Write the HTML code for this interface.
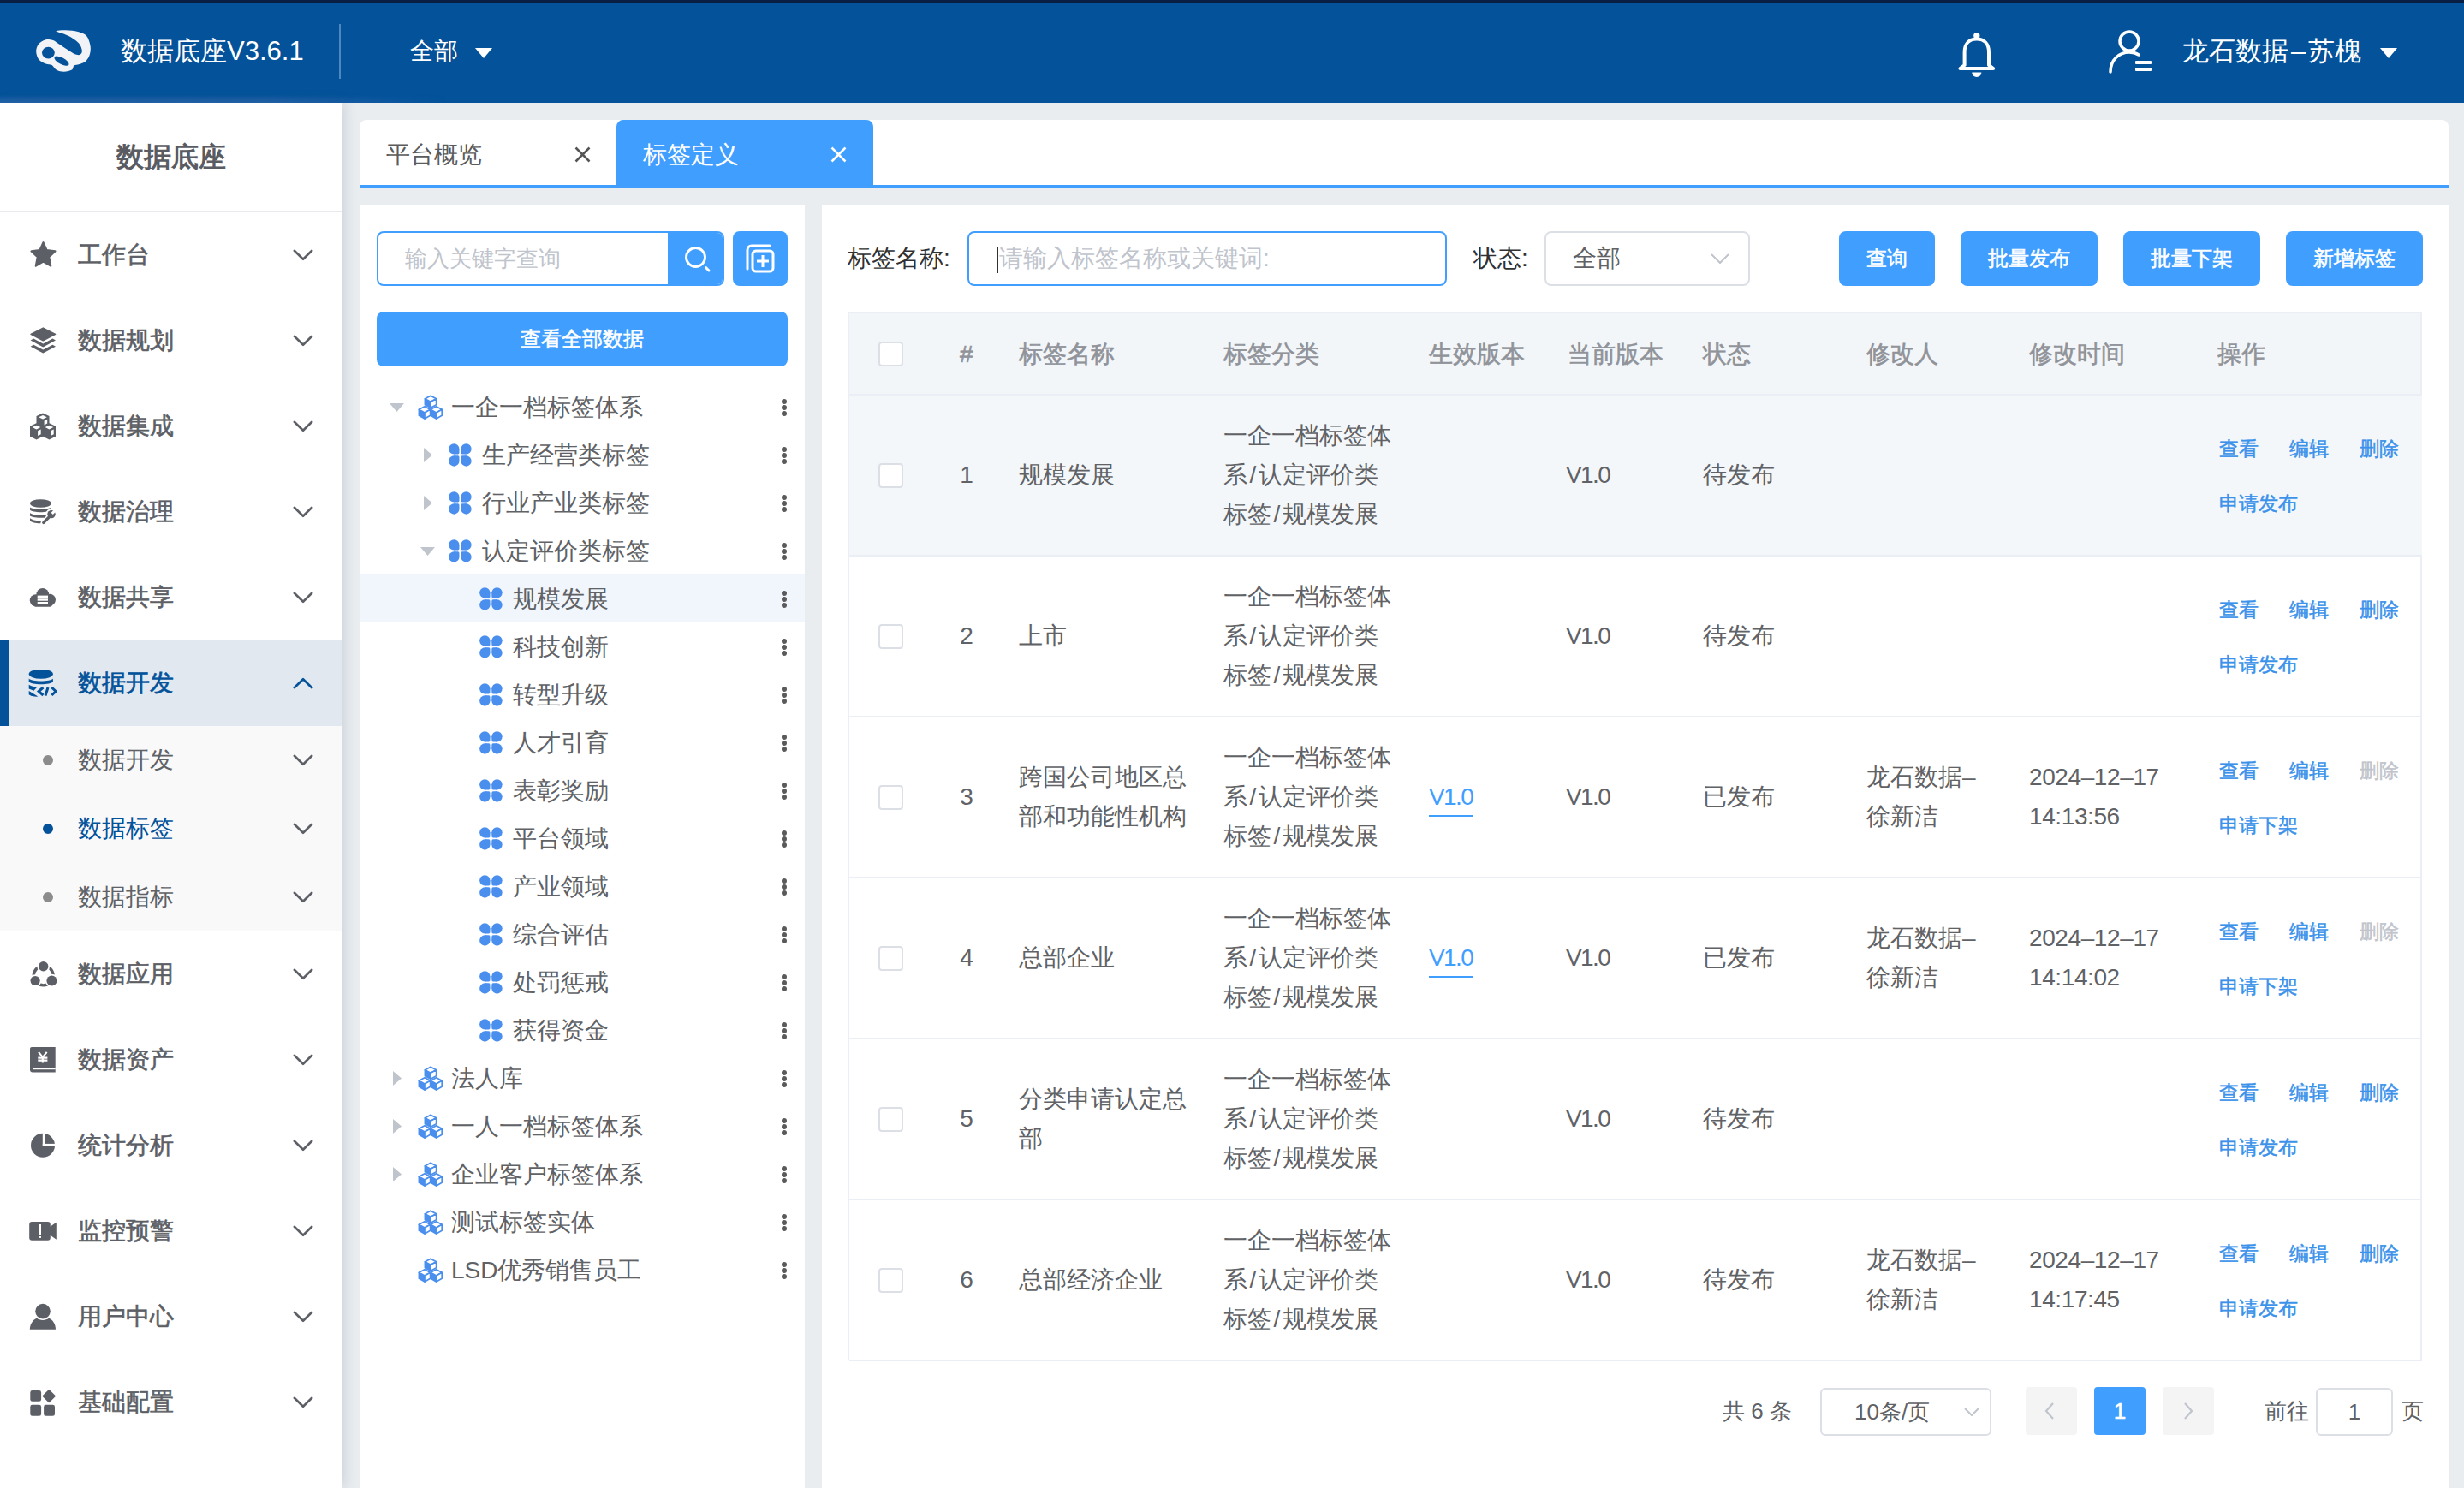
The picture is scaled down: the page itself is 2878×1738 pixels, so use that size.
<!DOCTYPE html>
<html><head><meta charset="utf-8"><title>数据底座</title>
<style>
*{box-sizing:border-box;margin:0;padding:0}
html,body{width:2878px;height:1738px;overflow:hidden}
body{position:relative;background:#e9edf0;font-family:"Liberation Sans",sans-serif;color:#606266}
.abs{position:absolute}
.t{position:absolute;white-space:nowrap}
#hdr{position:absolute;left:0;top:0;width:2878px;height:120px;background:#03529a}
#hdr .topline{position:absolute;left:0;top:0;width:100%;height:3px;background:#0a1f44}
#side{position:absolute;left:0;top:120px;width:400px;height:1618px;background:#fff;box-shadow:2px 0 14px rgba(60,80,110,0.18)}
.mi{position:absolute;left:0;width:400px;height:100px}
.mi .lab{position:absolute;left:91px;top:0;line-height:100px;font-size:28px;font-weight:400;-webkit-text-stroke-width:0.6px;color:#5d5f66}
.mi svg.ic{position:absolute;left:34px;top:34px;width:34px;height:34px}
.mi svg.chev{position:absolute;left:342px;top:43px;width:24px;height:14px}
.smi{position:absolute;left:0;width:400px;height:80px}
.smi .lab{position:absolute;left:91px;top:0;line-height:80px;font-size:28px;color:#606266}
.smi .dot{position:absolute;left:50px;top:34px;width:12px;height:12px;border-radius:50%;background:#8c8c8c}
.smi svg.chev{position:absolute;left:342px;top:33px;width:24px;height:14px}
#tabs{position:absolute;left:420px;top:140px;width:2440px;height:80px;background:#fff;border-radius:8px 8px 0 0;border-bottom:4px solid #409eff}
.tab{position:absolute;top:0;height:76px;width:300px}
.tab .lab{position:absolute;left:31px;top:3px;line-height:76px;font-size:28px;color:#5b5b5b}
#tree{position:absolute;left:420px;top:240px;width:520px;height:1498px;background:#fff}
#main{position:absolute;left:960px;top:240px;width:1900px;height:1498px;background:#fff}
.btn{position:absolute;top:30px;height:64px;background:#409eff;border-radius:8px;color:#fff;font-size:24px;font-weight:400;-webkit-text-stroke-width:0.6px;text-align:center;line-height:64px}
.tn{position:absolute;left:0;width:520px;height:56px}
.tn .lab{position:absolute;top:1px;line-height:56px;font-size:28px;color:#606266}
.tn .more{position:absolute;left:493px;top:19px;width:6px;height:20px}
.th{position:absolute;top:0;line-height:95px;font-size:28px;font-weight:400;-webkit-text-stroke-width:0.6px;color:#909399}
.row{position:absolute;left:0;width:1837px;height:188px;border-bottom:2px solid #ebeef5}
.cell{position:absolute;font-size:28px;line-height:46px;color:#606266;white-space:nowrap}
.cb{position:absolute;width:29px;height:29px;border:2px solid #dcdfe6;border-radius:4px;background:#fff}
.op{position:absolute;font-size:23px;font-weight:400;-webkit-text-stroke-width:0.5px;color:#3c92ea;line-height:30px;white-space:nowrap}
</style></head><body>

<div id="hdr"><div class="topline"></div><div class="abs" style="left:0;top:110px;width:520px;height:10px;background:linear-gradient(to bottom,rgba(3,82,154,0),rgba(45,105,175,0.75));-webkit-mask-image:linear-gradient(to right,#000 60%,transparent);"></div>
<svg class="abs" style="left:30px;top:25px" width="90" height="70" viewBox="0 0 90 70">
<path d="M36.0 11.0 C37.5 10.6 42.8 10.1 47.0 10.3 C51.2 10.5 57.2 11.1 61.0 12.0 C64.8 12.9 67.5 14.0 69.6 15.5 C71.7 17.0 72.4 18.5 73.4 21.0 C74.4 23.5 75.6 27.4 75.8 30.6 C76.0 33.8 75.4 37.3 74.4 40.0 C73.4 42.7 71.6 45.3 69.6 47.0 C67.6 48.7 64.8 49.2 62.6 50.0 C60.4 50.8 57.9 50.4 56.5 51.5 C55.1 52.6 56.0 55.3 54.0 56.5 C52.0 57.7 47.7 58.8 44.7 58.8 C41.7 58.8 38.1 57.8 35.8 56.5 C33.4 55.2 32.6 52.2 30.6 51.0 C28.6 49.8 26.0 50.4 23.5 49.4 C21.0 48.4 17.4 47.1 15.5 44.7 C13.6 42.4 12.3 38.3 12.2 35.3 C12.1 32.2 13.1 28.8 15.0 26.4 C16.9 24.0 20.7 21.9 23.5 21.2 C26.3 20.5 29.4 21.1 32.0 22.0 C34.6 22.9 36.2 24.7 39.0 26.5 C41.8 28.3 46.0 31.1 49.0 33.0 C52.0 34.9 54.6 37.0 57.0 38.0 C59.4 39.0 62.0 39.5 63.5 38.8 C65.0 38.1 66.0 36.1 65.8 34.0 C65.6 31.9 64.4 28.4 62.5 26.0 C60.6 23.6 57.4 21.4 54.5 19.5 C51.6 17.6 47.8 16.0 45.0 14.8 C42.2 13.6 39.5 13.1 38.0 12.5 C36.5 11.9 34.5 11.4 36.0 11.0 Z" fill="#f1f3f6"/>
<ellipse cx="26.4" cy="36.6" rx="7.4" ry="6.8" fill="#03529a"/>
<ellipse cx="42" cy="46.2" rx="9.5" ry="3.8" transform="rotate(28 42 46.2)" fill="#03529a"/>
</svg>
<div class="t" style="left:141px;top:0;line-height:120px;font-size:31px;color:#fff">数据底座V3.6.1</div>
<div class="abs" style="left:396px;top:28px;width:2px;height:64px;background:rgba(140,180,225,0.55)"></div>
<div class="t" style="left:479px;top:0;line-height:120px;font-size:28px;color:#fff">全部</div>
<svg class="abs" style="left:555px;top:56px" width="20" height="12" viewBox="0 0 20 12"><path d="M0 0H20L10 12Z" fill="#fff"/></svg>
<svg class="abs" style="left:2286px;top:36px" width="48" height="56" viewBox="0 0 48 56">
<circle cx="22.8" cy="5.5" r="3.6" fill="#fff"/>
<path d="M22.8 9.6 C13.5 9.6 8.6 16 8.6 25 V40 L3.4 44 H42.2 L37 40 V25 C37 16 32.1 9.6 22.8 9.6 Z" fill="none" stroke="#fff" stroke-width="4" stroke-linejoin="round"/>
<path d="M17.3 48.6 H28.3 C28.3 52 25.8 54 22.8 54 C19.8 54 17.3 52 17.3 48.6 Z" fill="#fff"/>
</svg>
<svg class="abs" style="left:2462px;top:34px" width="54" height="52" viewBox="0 0 54 52">
<circle cx="25" cy="14" r="11" fill="none" stroke="#fff" stroke-width="3.5"/>
<path d="M3 50 C3 36 13 27 25 27 C29 27 33 28 36 30" fill="none" stroke="#fff" stroke-width="3.5" stroke-linecap="round"/>
<rect x="32" y="37" width="19" height="4" rx="1" fill="#fff"/>
<rect x="32" y="45" width="19" height="4" rx="1" fill="#fff"/>
</svg>
<div class="t" style="left:2549px;top:0;line-height:120px;font-size:31px;color:#fff">龙石数据<span style="margin:0 3px">–</span>苏槐</div>
<svg class="abs" style="left:2780px;top:56px" width="20" height="12" viewBox="0 0 20 12"><path d="M0 0H20L10 12Z" fill="#fff"/></svg>
</div>
<div id="side">
<div class="t" style="left:0;width:400px;text-align:center;top:28px;line-height:70px;font-size:32px;font-weight:700;color:#5a5c63">数据底座</div>
<div class="abs" style="left:0;top:126px;width:400px;height:2px;background:#e8e9ec"></div>
<div class="mi" style="top:128px"><svg class="ic" viewBox="0 0 34 34"><path d="M16.5 1.2 L20.6 10.1 L30.4 11.4 L23.2 18.2 L25.2 28.6 L16.5 23.6 L7.8 28.6 L9.8 18.2 L2.6 11.4 L12.4 10.1 Z" fill="#5d5f66" stroke="#5d5f66" stroke-width="2.2" stroke-linejoin="round"/></svg><div class="lab">工作台</div><svg class="chev" viewBox="0 0 24 14"><path d="M1.8 1.8 L12 11.8 L22.2 1.8" fill="none" stroke="#5d5f66" stroke-width="2.6" stroke-linecap="round" stroke-linejoin="round"/></svg></div>
<div class="mi" style="top:228px"><svg class="ic" viewBox="0 0 34 34"><path d="M16.3 1 L30.6 8.4 L16.3 15.8 L2 8.4 Z" fill="#5d5f66" stroke="#5d5f66" stroke-width="1.4" stroke-linejoin="round"/><path d="M5.2 13.6 L16.3 19.4 L27.4 13.6 L31 15.6 L16.3 23.4 L1.6 15.6 Z" fill="#5d5f66"/><path d="M5.2 20.8 L16.3 26.6 L27.4 20.8 L31 22.8 L16.3 30.6 L1.6 22.8 Z" fill="#5d5f66"/></svg><div class="lab">数据规划</div><svg class="chev" viewBox="0 0 24 14"><path d="M1.8 1.8 L12 11.8 L22.2 1.8" fill="none" stroke="#5d5f66" stroke-width="2.6" stroke-linecap="round" stroke-linejoin="round"/></svg></div>
<div class="mi" style="top:328px"><svg class="ic" viewBox="0 0 34 34"><path d="M16 0.5 L23.5 4 V12.3 L31 15.8 V27.8 L23.5 31.5 L16 27.8 L8.5 31.5 L1 27.8 V15.8 L8.5 12.3 V4 Z" fill="#5d5f66"/><path d="M16 3 L20.8 5.3 L16 7.6 L11.2 5.3 Z M17.6 9.5 L21.2 7.7 V12.6 L17.6 14.4 Z M8.5 14.8 L13.3 17.1 L8.5 19.4 L3.7 17.1 Z M10.1 21.3 L13.7 19.5 V25.3 L10.1 27.1 Z M23.5 14.8 L28.3 17.1 L23.5 19.4 L18.7 17.1 Z M25.1 21.3 L28.7 19.5 V25.3 L25.1 27.1 Z" fill="#fff"/></svg><div class="lab">数据集成</div><svg class="chev" viewBox="0 0 24 14"><path d="M1.8 1.8 L12 11.8 L22.2 1.8" fill="none" stroke="#5d5f66" stroke-width="2.6" stroke-linecap="round" stroke-linejoin="round"/></svg></div>
<div class="mi" style="top:428px"><svg class="ic" viewBox="0 0 34 34"><ellipse cx="13.4" cy="6" rx="12.4" ry="4.8" fill="#5d5f66"/><path d="M1 10.6 C4 13.6 22.8 13.6 25.8 10.6 V13.6 C22.8 17.2 4 17.2 1 13.6 Z" fill="#5d5f66"/><path d="M1 17 C4 20 16 20.6 23 19 V22.2 C16 23.4 4 22.6 1 20.4 Z" fill="#5d5f66"/><path d="M1 23.2 C4 26 12 26.8 18 25.6 V28.6 C12 30 3.5 28.6 1 26.4 Z" fill="#5d5f66"/><circle cx="26" cy="18.6" r="6.6" fill="#fff"/><path d="M16.8 28.4 L24 21.2" stroke="#fff" stroke-width="6.4" stroke-linecap="round"/><circle cx="26" cy="18.6" r="4.7" fill="#5d5f66"/><path d="M16.8 28.4 L24 21.2" stroke="#5d5f66" stroke-width="3.4" stroke-linecap="round"/><path d="M25.6 16.8 L29.4 13 L31.6 15.2 L27.8 19 Z" fill="#fff"/></svg><div class="lab">数据治理</div><svg class="chev" viewBox="0 0 24 14"><path d="M1.8 1.8 L12 11.8 L22.2 1.8" fill="none" stroke="#5d5f66" stroke-width="2.6" stroke-linecap="round" stroke-linejoin="round"/></svg></div>
<div class="mi" style="top:528px"><svg class="ic" viewBox="0 0 34 34"><circle cx="15.8" cy="12.4" r="7.4" fill="#5d5f66"/><circle cx="24.2" cy="18.6" r="6.8" fill="#5d5f66"/><circle cx="7.8" cy="19.2" r="7" fill="#5d5f66"/><rect x="5" y="18" width="22" height="8.7" rx="3" fill="#5d5f66"/><rect x="9.7" y="13.6" width="12.3" height="2.4" fill="#fff"/><rect x="9.7" y="17.3" width="12.3" height="2.4" fill="#fff"/><rect x="9.7" y="21" width="12.3" height="2.3" fill="#fff"/></svg><div class="lab">数据共享</div><svg class="chev" viewBox="0 0 24 14"><path d="M1.8 1.8 L12 11.8 L22.2 1.8" fill="none" stroke="#5d5f66" stroke-width="2.6" stroke-linecap="round" stroke-linejoin="round"/></svg></div>
<div class="mi" style="top:628px;background:#e2e8f0"><div class="abs" style="left:0;top:0;width:10px;height:100px;background:#03529a"></div><svg class="ic" style="left:33px" viewBox="0 0 34 34"><ellipse cx="14.8" cy="5.2" rx="14.1" ry="5.6" fill="#03529a"/><path d="M0.7 10.6 C3 14.6 26.6 14.6 28.9 10.6 V14 C26.6 18.4 3 18.4 0.7 14 Z" fill="#03529a"/><path d="M0.7 17.8 C3.5 19.6 7 20.2 10.4 20.6 L6.4 24.7 L0.7 22.6 Z" fill="#03529a"/><path d="M0.7 25 L11.3 31.6 C6.5 31.8 3 30.8 0.7 29.2 Z" fill="#03529a"/><path d="M17.4 21 L12.2 25.5 L17.4 30 M23 21 L20 30.5 M27.4 21 L32.2 25.5 L27.4 30" fill="none" stroke="#03529a" stroke-width="3" stroke-linejoin="miter"/></svg><div class="lab" style="color:#03529a">数据开发</div><svg class="chev" viewBox="0 0 24 14"><path d="M1.8 12.2 L12 2.2 L22.2 12.2" fill="none" stroke="#03529a" stroke-width="2.6" stroke-linecap="round" stroke-linejoin="round"/></svg></div>
<div class="abs" style="left:0;top:728px;width:400px;height:240px;background:#f9f9fa"></div>
<div class="smi" style="top:728px"><div class="dot" style="background:#8c8c8c"></div><div class="lab" style="color:#606266">数据开发</div><svg class="chev" viewBox="0 0 24 14"><path d="M1.8 1.8 L12 11.8 L22.2 1.8" fill="none" stroke="#5d5f66" stroke-width="2.6" stroke-linecap="round" stroke-linejoin="round"/></svg></div>
<div class="smi" style="top:808px"><div class="dot" style="background:#03529a"></div><div class="lab" style="color:#03529a">数据标签</div><svg class="chev" viewBox="0 0 24 14"><path d="M1.8 1.8 L12 11.8 L22.2 1.8" fill="none" stroke="#5d5f66" stroke-width="2.6" stroke-linecap="round" stroke-linejoin="round"/></svg></div>
<div class="smi" style="top:888px"><div class="dot" style="background:#8c8c8c"></div><div class="lab" style="color:#606266">数据指标</div><svg class="chev" viewBox="0 0 24 14"><path d="M1.8 1.8 L12 11.8 L22.2 1.8" fill="none" stroke="#5d5f66" stroke-width="2.6" stroke-linecap="round" stroke-linejoin="round"/></svg></div>
<div class="mi" style="top:968px"><svg class="ic" viewBox="0 0 34 34"><circle cx="16.7" cy="17.5" r="11.4" fill="none" stroke="#5d5f66" stroke-width="3.4"/><circle cx="16.7" cy="6.8" r="7.4" fill="#fff"/><circle cx="7.1" cy="23.5" r="7.3" fill="#fff"/><circle cx="26.4" cy="23.5" r="7.7" fill="#fff"/><circle cx="16.7" cy="6.8" r="5.7" fill="#5d5f66"/><circle cx="7.1" cy="23.5" r="5.6" fill="#5d5f66"/><circle cx="26.4" cy="23.5" r="6" fill="#5d5f66"/></svg><div class="lab">数据应用</div><svg class="chev" viewBox="0 0 24 14"><path d="M1.8 1.8 L12 11.8 L22.2 1.8" fill="none" stroke="#5d5f66" stroke-width="2.6" stroke-linecap="round" stroke-linejoin="round"/></svg></div>
<div class="mi" style="top:1068px"><svg class="ic" viewBox="0 0 34 34"><path d="M3 1 H30.7 V30.6 H4 C2.2 30.6 1 29.4 1 27.6 V3 C1 1.9 1.9 1 3 1 Z" fill="#5d5f66"/><rect x="4.6" y="25.2" width="26.1" height="2" fill="#fff"/><path d="M11 6.9 L15.85 12.8 L20.7 6.9 M10.3 13.6 H21.4 M10.3 16.6 H21.4 M15.85 12.8 V19.6" fill="none" stroke="#fff" stroke-width="2.1"/></svg><div class="lab">数据资产</div><svg class="chev" viewBox="0 0 24 14"><path d="M1.8 1.8 L12 11.8 L22.2 1.8" fill="none" stroke="#5d5f66" stroke-width="2.6" stroke-linecap="round" stroke-linejoin="round"/></svg></div>
<div class="mi" style="top:1168px"><svg class="ic" viewBox="0 0 34 34"><circle cx="16" cy="15.8" r="14" fill="#5d5f66"/><rect x="15.8" y="0" width="2.2" height="16.3" fill="#fff"/><rect x="15.8" y="13.9" width="16" height="2.4" fill="#fff"/></svg><div class="lab">统计分析</div><svg class="chev" viewBox="0 0 24 14"><path d="M1.8 1.8 L12 11.8 L22.2 1.8" fill="none" stroke="#5d5f66" stroke-width="2.6" stroke-linecap="round" stroke-linejoin="round"/></svg></div>
<div class="mi" style="top:1268px"><svg class="ic" viewBox="0 0 34 34"><rect x="0.2" y="4.9" width="24.6" height="21.8" rx="3" fill="#5d5f66"/><path d="M24 11.1 L31.8 5.7 V25.7 L24 20.2 Z" fill="#5d5f66"/><rect x="11.5" y="8" width="2.5" height="12.2" fill="#fff"/><rect x="11.5" y="22" width="2.5" height="1.9" fill="#fff"/></svg><div class="lab">监控预警</div><svg class="chev" viewBox="0 0 24 14"><path d="M1.8 1.8 L12 11.8 L22.2 1.8" fill="none" stroke="#5d5f66" stroke-width="2.6" stroke-linecap="round" stroke-linejoin="round"/></svg></div>
<div class="mi" style="top:1368px"><svg class="ic" viewBox="0 0 34 34"><circle cx="16" cy="9.6" r="8.8" fill="#5d5f66"/><path d="M0.8 30.8 C1.2 24 4.5 19.6 9 17.8 C12.5 20.6 19.5 20.6 23 17.8 C27.5 19.6 30.8 24 31 30.8 Z" fill="#5d5f66"/></svg><div class="lab">用户中心</div><svg class="chev" viewBox="0 0 24 14"><path d="M1.8 1.8 L12 11.8 L22.2 1.8" fill="none" stroke="#5d5f66" stroke-width="2.6" stroke-linecap="round" stroke-linejoin="round"/></svg></div>
<div class="mi" style="top:1468px"><svg class="ic" viewBox="0 0 34 34"><rect x="1.3" y="2" width="12.8" height="12.8" rx="2.4" fill="#5d5f66"/><rect x="1.3" y="18.8" width="12.8" height="13" rx="2.4" fill="#5d5f66"/><rect x="17.1" y="18.8" width="12.9" height="13" rx="2.4" fill="#5d5f66"/><path d="M23.2 1.8 L30 8.6 L23.2 15.4 L16.4 8.6 Z" fill="#5d5f66" stroke="#5d5f66" stroke-width="1.6" stroke-linejoin="round"/></svg><div class="lab">基础配置</div><svg class="chev" viewBox="0 0 24 14"><path d="M1.8 1.8 L12 11.8 L22.2 1.8" fill="none" stroke="#5d5f66" stroke-width="2.6" stroke-linecap="round" stroke-linejoin="round"/></svg></div>
</div>
<div id="tabs">
<div class="tab" style="left:0"><div class="lab">平台概览</div><svg class="abs" style="left:251px;top:31px" width="19" height="19" viewBox="0 0 19 19"><path d="M1.5 1.5 L17.5 17.5 M17.5 1.5 L1.5 17.5" stroke="#555" stroke-width="2.5"/></svg></div>
<div class="tab" style="left:300px;background:#409eff;border-radius:8px 8px 0 0;height:80px"><div class="lab" style="color:#fff">标签定义</div><svg class="abs" style="left:250px;top:31px" width="19" height="19" viewBox="0 0 19 19"><path d="M1.5 1.5 L17.5 17.5 M17.5 1.5 L1.5 17.5" stroke="#fff" stroke-width="2.5"/></svg></div>
</div>
<div id="tree">
<div class="abs" style="left:20px;top:30px;width:406px;height:64px;border:2px solid #409eff;border-radius:8px;overflow:hidden;background:#fff"><div class="t" style="left:31px;top:0;line-height:60px;font-size:26px;color:#c0c4cc">输入关键字查询</div><div class="abs" style="left:338px;top:0;width:66px;height:60px;background:#409eff"></div></div>
<svg class="abs" style="left:379px;top:47px" width="32" height="32" viewBox="0 0 32 32"><circle cx="13.5" cy="13.5" r="11" fill="none" stroke="#fff" stroke-width="2.9"/><path d="M25.6 25.6 L29 29" stroke="#fff" stroke-width="2.9" stroke-linecap="round"/></svg>
<div class="abs" style="left:436px;top:30px;width:64px;height:64px;background:#409eff;border-radius:8px"></div>
<svg class="abs" style="left:450px;top:44px" width="36" height="36" viewBox="0 0 36 36"><path d="M3 30 V8 C3 5 5 3 8 3 H29" fill="none" stroke="#fff" stroke-width="3" stroke-linecap="round"/><rect x="9" y="9" width="24" height="24" rx="4" fill="none" stroke="#fff" stroke-width="3"/><path d="M21 14 V28 M14 21 H28" stroke="#fff" stroke-width="3"/></svg>
<div class="btn" style="left:20px;top:124px;width:480px">查看全部数据</div>
<div class="tn" style="top:207px;"><svg class="abs" style="left:35px;top:24px" width="17" height="10" viewBox="0 0 17 10"><path d="M0 0 H17 L8.5 10Z" fill="#c0c4cc"/></svg><svg class="abs" style="left:68px;top:14px" width="30" height="31" viewBox="0 0 30 31"><polygon points="8.40,4.76 15.00,8.33 15.00,15.32 8.40,11.76" fill="#4a8fee" stroke="#4a8fee" stroke-width="1.7" stroke-linejoin="round"/><polygon points="15.00,1.20 21.60,4.76 15.00,8.33 8.40,4.76" fill="#fff" stroke="#4a8fee" stroke-width="1.7" stroke-linejoin="round"/><polygon points="15.00,8.33 21.60,4.76 21.60,11.76 15.00,15.32" fill="#fff" stroke="#4a8fee" stroke-width="1.7" stroke-linejoin="round"/><polygon points="1.40,17.36 8.00,20.93 8.00,27.92 1.40,24.36" fill="#4a8fee" stroke="#4a8fee" stroke-width="1.7" stroke-linejoin="round"/><polygon points="8.00,13.80 14.60,17.36 8.00,20.93 1.40,17.36" fill="#fff" stroke="#4a8fee" stroke-width="1.7" stroke-linejoin="round"/><polygon points="8.00,20.93 14.60,17.36 14.60,24.36 8.00,27.92" fill="#fff" stroke="#4a8fee" stroke-width="1.7" stroke-linejoin="round"/><polygon points="15.00,17.36 21.60,20.93 21.60,27.92 15.00,24.36" fill="#4a8fee" stroke="#4a8fee" stroke-width="1.7" stroke-linejoin="round"/><polygon points="21.60,13.80 28.20,17.36 21.60,20.93 15.00,17.36" fill="#fff" stroke="#4a8fee" stroke-width="1.7" stroke-linejoin="round"/><polygon points="21.60,20.93 28.20,17.36 28.20,24.36 21.60,27.92" fill="#fff" stroke="#4a8fee" stroke-width="1.7" stroke-linejoin="round"/></svg><div class="lab" style="left:107px">一企一档标签体系</div><svg class="more" viewBox="0 0 6 20"><circle cx="3" cy="3" r="3" fill="#5a5a5a"/><circle cx="3" cy="10" r="3" fill="#5a5a5a"/><circle cx="3" cy="17" r="3" fill="#5a5a5a"/></svg></div>
<div class="tn" style="top:263px;"><svg class="abs" style="left:75px;top:20px" width="10" height="17" viewBox="0 0 10 17"><path d="M0 0 L10 8.5 L0 17Z" fill="#c0c4cc"/></svg><svg class="abs" style="left:104px;top:15px" width="27" height="27" viewBox="0 0 27 27"><g fill="#4a8fee"><circle cx="6.3" cy="6.3" r="6.15"/><path d="M6.3 6.3 H12.45 V10.850000000000001 Q12.45 12.45 10.850000000000001 12.45 H6.3 Z"/><circle cx="20.5" cy="6.3" r="6.15"/><path d="M20.5 6.3 H14.35 V10.850000000000001 Q14.35 12.45 15.95 12.45 H20.5 Z"/><circle cx="6.3" cy="20.5" r="6.15"/><path d="M6.3 20.5 H12.45 V15.95 Q12.45 14.35 10.850000000000001 14.35 H6.3 Z"/><circle cx="20.5" cy="20.5" r="6.15"/><path d="M20.5 20.5 H14.35 V15.95 Q14.35 14.35 15.95 14.35 H20.5 Z"/></g></svg><div class="lab" style="left:143px">生产经营类标签</div><svg class="more" viewBox="0 0 6 20"><circle cx="3" cy="3" r="3" fill="#5a5a5a"/><circle cx="3" cy="10" r="3" fill="#5a5a5a"/><circle cx="3" cy="17" r="3" fill="#5a5a5a"/></svg></div>
<div class="tn" style="top:319px;"><svg class="abs" style="left:75px;top:20px" width="10" height="17" viewBox="0 0 10 17"><path d="M0 0 L10 8.5 L0 17Z" fill="#c0c4cc"/></svg><svg class="abs" style="left:104px;top:15px" width="27" height="27" viewBox="0 0 27 27"><g fill="#4a8fee"><circle cx="6.3" cy="6.3" r="6.15"/><path d="M6.3 6.3 H12.45 V10.850000000000001 Q12.45 12.45 10.850000000000001 12.45 H6.3 Z"/><circle cx="20.5" cy="6.3" r="6.15"/><path d="M20.5 6.3 H14.35 V10.850000000000001 Q14.35 12.45 15.95 12.45 H20.5 Z"/><circle cx="6.3" cy="20.5" r="6.15"/><path d="M6.3 20.5 H12.45 V15.95 Q12.45 14.35 10.850000000000001 14.35 H6.3 Z"/><circle cx="20.5" cy="20.5" r="6.15"/><path d="M20.5 20.5 H14.35 V15.95 Q14.35 14.35 15.95 14.35 H20.5 Z"/></g></svg><div class="lab" style="left:143px">行业产业类标签</div><svg class="more" viewBox="0 0 6 20"><circle cx="3" cy="3" r="3" fill="#5a5a5a"/><circle cx="3" cy="10" r="3" fill="#5a5a5a"/><circle cx="3" cy="17" r="3" fill="#5a5a5a"/></svg></div>
<div class="tn" style="top:375px;"><svg class="abs" style="left:71px;top:24px" width="17" height="10" viewBox="0 0 17 10"><path d="M0 0 H17 L8.5 10Z" fill="#c0c4cc"/></svg><svg class="abs" style="left:104px;top:15px" width="27" height="27" viewBox="0 0 27 27"><g fill="#4a8fee"><circle cx="6.3" cy="6.3" r="6.15"/><path d="M6.3 6.3 H12.45 V10.850000000000001 Q12.45 12.45 10.850000000000001 12.45 H6.3 Z"/><circle cx="20.5" cy="6.3" r="6.15"/><path d="M20.5 6.3 H14.35 V10.850000000000001 Q14.35 12.45 15.95 12.45 H20.5 Z"/><circle cx="6.3" cy="20.5" r="6.15"/><path d="M6.3 20.5 H12.45 V15.95 Q12.45 14.35 10.850000000000001 14.35 H6.3 Z"/><circle cx="20.5" cy="20.5" r="6.15"/><path d="M20.5 20.5 H14.35 V15.95 Q14.35 14.35 15.95 14.35 H20.5 Z"/></g></svg><div class="lab" style="left:143px">认定评价类标签</div><svg class="more" viewBox="0 0 6 20"><circle cx="3" cy="3" r="3" fill="#5a5a5a"/><circle cx="3" cy="10" r="3" fill="#5a5a5a"/><circle cx="3" cy="17" r="3" fill="#5a5a5a"/></svg></div>
<div class="tn" style="top:431px;background:#f0f6fc;"><svg class="abs" style="left:140px;top:15px" width="27" height="27" viewBox="0 0 27 27"><g fill="#4a8fee"><circle cx="6.3" cy="6.3" r="6.15"/><path d="M6.3 6.3 H12.45 V10.850000000000001 Q12.45 12.45 10.850000000000001 12.45 H6.3 Z"/><circle cx="20.5" cy="6.3" r="6.15"/><path d="M20.5 6.3 H14.35 V10.850000000000001 Q14.35 12.45 15.95 12.45 H20.5 Z"/><circle cx="6.3" cy="20.5" r="6.15"/><path d="M6.3 20.5 H12.45 V15.95 Q12.45 14.35 10.850000000000001 14.35 H6.3 Z"/><circle cx="20.5" cy="20.5" r="6.15"/><path d="M20.5 20.5 H14.35 V15.95 Q14.35 14.35 15.95 14.35 H20.5 Z"/></g></svg><div class="lab" style="left:179px">规模发展</div><svg class="more" viewBox="0 0 6 20"><circle cx="3" cy="3" r="3" fill="#5a5a5a"/><circle cx="3" cy="10" r="3" fill="#5a5a5a"/><circle cx="3" cy="17" r="3" fill="#5a5a5a"/></svg></div>
<div class="tn" style="top:487px;"><svg class="abs" style="left:140px;top:15px" width="27" height="27" viewBox="0 0 27 27"><g fill="#4a8fee"><circle cx="6.3" cy="6.3" r="6.15"/><path d="M6.3 6.3 H12.45 V10.850000000000001 Q12.45 12.45 10.850000000000001 12.45 H6.3 Z"/><circle cx="20.5" cy="6.3" r="6.15"/><path d="M20.5 6.3 H14.35 V10.850000000000001 Q14.35 12.45 15.95 12.45 H20.5 Z"/><circle cx="6.3" cy="20.5" r="6.15"/><path d="M6.3 20.5 H12.45 V15.95 Q12.45 14.35 10.850000000000001 14.35 H6.3 Z"/><circle cx="20.5" cy="20.5" r="6.15"/><path d="M20.5 20.5 H14.35 V15.95 Q14.35 14.35 15.95 14.35 H20.5 Z"/></g></svg><div class="lab" style="left:179px">科技创新</div><svg class="more" viewBox="0 0 6 20"><circle cx="3" cy="3" r="3" fill="#5a5a5a"/><circle cx="3" cy="10" r="3" fill="#5a5a5a"/><circle cx="3" cy="17" r="3" fill="#5a5a5a"/></svg></div>
<div class="tn" style="top:543px;"><svg class="abs" style="left:140px;top:15px" width="27" height="27" viewBox="0 0 27 27"><g fill="#4a8fee"><circle cx="6.3" cy="6.3" r="6.15"/><path d="M6.3 6.3 H12.45 V10.850000000000001 Q12.45 12.45 10.850000000000001 12.45 H6.3 Z"/><circle cx="20.5" cy="6.3" r="6.15"/><path d="M20.5 6.3 H14.35 V10.850000000000001 Q14.35 12.45 15.95 12.45 H20.5 Z"/><circle cx="6.3" cy="20.5" r="6.15"/><path d="M6.3 20.5 H12.45 V15.95 Q12.45 14.35 10.850000000000001 14.35 H6.3 Z"/><circle cx="20.5" cy="20.5" r="6.15"/><path d="M20.5 20.5 H14.35 V15.95 Q14.35 14.35 15.95 14.35 H20.5 Z"/></g></svg><div class="lab" style="left:179px">转型升级</div><svg class="more" viewBox="0 0 6 20"><circle cx="3" cy="3" r="3" fill="#5a5a5a"/><circle cx="3" cy="10" r="3" fill="#5a5a5a"/><circle cx="3" cy="17" r="3" fill="#5a5a5a"/></svg></div>
<div class="tn" style="top:599px;"><svg class="abs" style="left:140px;top:15px" width="27" height="27" viewBox="0 0 27 27"><g fill="#4a8fee"><circle cx="6.3" cy="6.3" r="6.15"/><path d="M6.3 6.3 H12.45 V10.850000000000001 Q12.45 12.45 10.850000000000001 12.45 H6.3 Z"/><circle cx="20.5" cy="6.3" r="6.15"/><path d="M20.5 6.3 H14.35 V10.850000000000001 Q14.35 12.45 15.95 12.45 H20.5 Z"/><circle cx="6.3" cy="20.5" r="6.15"/><path d="M6.3 20.5 H12.45 V15.95 Q12.45 14.35 10.850000000000001 14.35 H6.3 Z"/><circle cx="20.5" cy="20.5" r="6.15"/><path d="M20.5 20.5 H14.35 V15.95 Q14.35 14.35 15.95 14.35 H20.5 Z"/></g></svg><div class="lab" style="left:179px">人才引育</div><svg class="more" viewBox="0 0 6 20"><circle cx="3" cy="3" r="3" fill="#5a5a5a"/><circle cx="3" cy="10" r="3" fill="#5a5a5a"/><circle cx="3" cy="17" r="3" fill="#5a5a5a"/></svg></div>
<div class="tn" style="top:655px;"><svg class="abs" style="left:140px;top:15px" width="27" height="27" viewBox="0 0 27 27"><g fill="#4a8fee"><circle cx="6.3" cy="6.3" r="6.15"/><path d="M6.3 6.3 H12.45 V10.850000000000001 Q12.45 12.45 10.850000000000001 12.45 H6.3 Z"/><circle cx="20.5" cy="6.3" r="6.15"/><path d="M20.5 6.3 H14.35 V10.850000000000001 Q14.35 12.45 15.95 12.45 H20.5 Z"/><circle cx="6.3" cy="20.5" r="6.15"/><path d="M6.3 20.5 H12.45 V15.95 Q12.45 14.35 10.850000000000001 14.35 H6.3 Z"/><circle cx="20.5" cy="20.5" r="6.15"/><path d="M20.5 20.5 H14.35 V15.95 Q14.35 14.35 15.95 14.35 H20.5 Z"/></g></svg><div class="lab" style="left:179px">表彰奖励</div><svg class="more" viewBox="0 0 6 20"><circle cx="3" cy="3" r="3" fill="#5a5a5a"/><circle cx="3" cy="10" r="3" fill="#5a5a5a"/><circle cx="3" cy="17" r="3" fill="#5a5a5a"/></svg></div>
<div class="tn" style="top:711px;"><svg class="abs" style="left:140px;top:15px" width="27" height="27" viewBox="0 0 27 27"><g fill="#4a8fee"><circle cx="6.3" cy="6.3" r="6.15"/><path d="M6.3 6.3 H12.45 V10.850000000000001 Q12.45 12.45 10.850000000000001 12.45 H6.3 Z"/><circle cx="20.5" cy="6.3" r="6.15"/><path d="M20.5 6.3 H14.35 V10.850000000000001 Q14.35 12.45 15.95 12.45 H20.5 Z"/><circle cx="6.3" cy="20.5" r="6.15"/><path d="M6.3 20.5 H12.45 V15.95 Q12.45 14.35 10.850000000000001 14.35 H6.3 Z"/><circle cx="20.5" cy="20.5" r="6.15"/><path d="M20.5 20.5 H14.35 V15.95 Q14.35 14.35 15.95 14.35 H20.5 Z"/></g></svg><div class="lab" style="left:179px">平台领域</div><svg class="more" viewBox="0 0 6 20"><circle cx="3" cy="3" r="3" fill="#5a5a5a"/><circle cx="3" cy="10" r="3" fill="#5a5a5a"/><circle cx="3" cy="17" r="3" fill="#5a5a5a"/></svg></div>
<div class="tn" style="top:767px;"><svg class="abs" style="left:140px;top:15px" width="27" height="27" viewBox="0 0 27 27"><g fill="#4a8fee"><circle cx="6.3" cy="6.3" r="6.15"/><path d="M6.3 6.3 H12.45 V10.850000000000001 Q12.45 12.45 10.850000000000001 12.45 H6.3 Z"/><circle cx="20.5" cy="6.3" r="6.15"/><path d="M20.5 6.3 H14.35 V10.850000000000001 Q14.35 12.45 15.95 12.45 H20.5 Z"/><circle cx="6.3" cy="20.5" r="6.15"/><path d="M6.3 20.5 H12.45 V15.95 Q12.45 14.35 10.850000000000001 14.35 H6.3 Z"/><circle cx="20.5" cy="20.5" r="6.15"/><path d="M20.5 20.5 H14.35 V15.95 Q14.35 14.35 15.95 14.35 H20.5 Z"/></g></svg><div class="lab" style="left:179px">产业领域</div><svg class="more" viewBox="0 0 6 20"><circle cx="3" cy="3" r="3" fill="#5a5a5a"/><circle cx="3" cy="10" r="3" fill="#5a5a5a"/><circle cx="3" cy="17" r="3" fill="#5a5a5a"/></svg></div>
<div class="tn" style="top:823px;"><svg class="abs" style="left:140px;top:15px" width="27" height="27" viewBox="0 0 27 27"><g fill="#4a8fee"><circle cx="6.3" cy="6.3" r="6.15"/><path d="M6.3 6.3 H12.45 V10.850000000000001 Q12.45 12.45 10.850000000000001 12.45 H6.3 Z"/><circle cx="20.5" cy="6.3" r="6.15"/><path d="M20.5 6.3 H14.35 V10.850000000000001 Q14.35 12.45 15.95 12.45 H20.5 Z"/><circle cx="6.3" cy="20.5" r="6.15"/><path d="M6.3 20.5 H12.45 V15.95 Q12.45 14.35 10.850000000000001 14.35 H6.3 Z"/><circle cx="20.5" cy="20.5" r="6.15"/><path d="M20.5 20.5 H14.35 V15.95 Q14.35 14.35 15.95 14.35 H20.5 Z"/></g></svg><div class="lab" style="left:179px">综合评估</div><svg class="more" viewBox="0 0 6 20"><circle cx="3" cy="3" r="3" fill="#5a5a5a"/><circle cx="3" cy="10" r="3" fill="#5a5a5a"/><circle cx="3" cy="17" r="3" fill="#5a5a5a"/></svg></div>
<div class="tn" style="top:879px;"><svg class="abs" style="left:140px;top:15px" width="27" height="27" viewBox="0 0 27 27"><g fill="#4a8fee"><circle cx="6.3" cy="6.3" r="6.15"/><path d="M6.3 6.3 H12.45 V10.850000000000001 Q12.45 12.45 10.850000000000001 12.45 H6.3 Z"/><circle cx="20.5" cy="6.3" r="6.15"/><path d="M20.5 6.3 H14.35 V10.850000000000001 Q14.35 12.45 15.95 12.45 H20.5 Z"/><circle cx="6.3" cy="20.5" r="6.15"/><path d="M6.3 20.5 H12.45 V15.95 Q12.45 14.35 10.850000000000001 14.35 H6.3 Z"/><circle cx="20.5" cy="20.5" r="6.15"/><path d="M20.5 20.5 H14.35 V15.95 Q14.35 14.35 15.95 14.35 H20.5 Z"/></g></svg><div class="lab" style="left:179px">处罚惩戒</div><svg class="more" viewBox="0 0 6 20"><circle cx="3" cy="3" r="3" fill="#5a5a5a"/><circle cx="3" cy="10" r="3" fill="#5a5a5a"/><circle cx="3" cy="17" r="3" fill="#5a5a5a"/></svg></div>
<div class="tn" style="top:935px;"><svg class="abs" style="left:140px;top:15px" width="27" height="27" viewBox="0 0 27 27"><g fill="#4a8fee"><circle cx="6.3" cy="6.3" r="6.15"/><path d="M6.3 6.3 H12.45 V10.850000000000001 Q12.45 12.45 10.850000000000001 12.45 H6.3 Z"/><circle cx="20.5" cy="6.3" r="6.15"/><path d="M20.5 6.3 H14.35 V10.850000000000001 Q14.35 12.45 15.95 12.45 H20.5 Z"/><circle cx="6.3" cy="20.5" r="6.15"/><path d="M6.3 20.5 H12.45 V15.95 Q12.45 14.35 10.850000000000001 14.35 H6.3 Z"/><circle cx="20.5" cy="20.5" r="6.15"/><path d="M20.5 20.5 H14.35 V15.95 Q14.35 14.35 15.95 14.35 H20.5 Z"/></g></svg><div class="lab" style="left:179px">获得资金</div><svg class="more" viewBox="0 0 6 20"><circle cx="3" cy="3" r="3" fill="#5a5a5a"/><circle cx="3" cy="10" r="3" fill="#5a5a5a"/><circle cx="3" cy="17" r="3" fill="#5a5a5a"/></svg></div>
<div class="tn" style="top:991px;"><svg class="abs" style="left:39px;top:20px" width="10" height="17" viewBox="0 0 10 17"><path d="M0 0 L10 8.5 L0 17Z" fill="#c0c4cc"/></svg><svg class="abs" style="left:68px;top:14px" width="30" height="31" viewBox="0 0 30 31"><polygon points="8.40,4.76 15.00,8.33 15.00,15.32 8.40,11.76" fill="#4a8fee" stroke="#4a8fee" stroke-width="1.7" stroke-linejoin="round"/><polygon points="15.00,1.20 21.60,4.76 15.00,8.33 8.40,4.76" fill="#fff" stroke="#4a8fee" stroke-width="1.7" stroke-linejoin="round"/><polygon points="15.00,8.33 21.60,4.76 21.60,11.76 15.00,15.32" fill="#fff" stroke="#4a8fee" stroke-width="1.7" stroke-linejoin="round"/><polygon points="1.40,17.36 8.00,20.93 8.00,27.92 1.40,24.36" fill="#4a8fee" stroke="#4a8fee" stroke-width="1.7" stroke-linejoin="round"/><polygon points="8.00,13.80 14.60,17.36 8.00,20.93 1.40,17.36" fill="#fff" stroke="#4a8fee" stroke-width="1.7" stroke-linejoin="round"/><polygon points="8.00,20.93 14.60,17.36 14.60,24.36 8.00,27.92" fill="#fff" stroke="#4a8fee" stroke-width="1.7" stroke-linejoin="round"/><polygon points="15.00,17.36 21.60,20.93 21.60,27.92 15.00,24.36" fill="#4a8fee" stroke="#4a8fee" stroke-width="1.7" stroke-linejoin="round"/><polygon points="21.60,13.80 28.20,17.36 21.60,20.93 15.00,17.36" fill="#fff" stroke="#4a8fee" stroke-width="1.7" stroke-linejoin="round"/><polygon points="21.60,20.93 28.20,17.36 28.20,24.36 21.60,27.92" fill="#fff" stroke="#4a8fee" stroke-width="1.7" stroke-linejoin="round"/></svg><div class="lab" style="left:107px">法人库</div><svg class="more" viewBox="0 0 6 20"><circle cx="3" cy="3" r="3" fill="#5a5a5a"/><circle cx="3" cy="10" r="3" fill="#5a5a5a"/><circle cx="3" cy="17" r="3" fill="#5a5a5a"/></svg></div>
<div class="tn" style="top:1047px;"><svg class="abs" style="left:39px;top:20px" width="10" height="17" viewBox="0 0 10 17"><path d="M0 0 L10 8.5 L0 17Z" fill="#c0c4cc"/></svg><svg class="abs" style="left:68px;top:14px" width="30" height="31" viewBox="0 0 30 31"><polygon points="8.40,4.76 15.00,8.33 15.00,15.32 8.40,11.76" fill="#4a8fee" stroke="#4a8fee" stroke-width="1.7" stroke-linejoin="round"/><polygon points="15.00,1.20 21.60,4.76 15.00,8.33 8.40,4.76" fill="#fff" stroke="#4a8fee" stroke-width="1.7" stroke-linejoin="round"/><polygon points="15.00,8.33 21.60,4.76 21.60,11.76 15.00,15.32" fill="#fff" stroke="#4a8fee" stroke-width="1.7" stroke-linejoin="round"/><polygon points="1.40,17.36 8.00,20.93 8.00,27.92 1.40,24.36" fill="#4a8fee" stroke="#4a8fee" stroke-width="1.7" stroke-linejoin="round"/><polygon points="8.00,13.80 14.60,17.36 8.00,20.93 1.40,17.36" fill="#fff" stroke="#4a8fee" stroke-width="1.7" stroke-linejoin="round"/><polygon points="8.00,20.93 14.60,17.36 14.60,24.36 8.00,27.92" fill="#fff" stroke="#4a8fee" stroke-width="1.7" stroke-linejoin="round"/><polygon points="15.00,17.36 21.60,20.93 21.60,27.92 15.00,24.36" fill="#4a8fee" stroke="#4a8fee" stroke-width="1.7" stroke-linejoin="round"/><polygon points="21.60,13.80 28.20,17.36 21.60,20.93 15.00,17.36" fill="#fff" stroke="#4a8fee" stroke-width="1.7" stroke-linejoin="round"/><polygon points="21.60,20.93 28.20,17.36 28.20,24.36 21.60,27.92" fill="#fff" stroke="#4a8fee" stroke-width="1.7" stroke-linejoin="round"/></svg><div class="lab" style="left:107px">一人一档标签体系</div><svg class="more" viewBox="0 0 6 20"><circle cx="3" cy="3" r="3" fill="#5a5a5a"/><circle cx="3" cy="10" r="3" fill="#5a5a5a"/><circle cx="3" cy="17" r="3" fill="#5a5a5a"/></svg></div>
<div class="tn" style="top:1103px;"><svg class="abs" style="left:39px;top:20px" width="10" height="17" viewBox="0 0 10 17"><path d="M0 0 L10 8.5 L0 17Z" fill="#c0c4cc"/></svg><svg class="abs" style="left:68px;top:14px" width="30" height="31" viewBox="0 0 30 31"><polygon points="8.40,4.76 15.00,8.33 15.00,15.32 8.40,11.76" fill="#4a8fee" stroke="#4a8fee" stroke-width="1.7" stroke-linejoin="round"/><polygon points="15.00,1.20 21.60,4.76 15.00,8.33 8.40,4.76" fill="#fff" stroke="#4a8fee" stroke-width="1.7" stroke-linejoin="round"/><polygon points="15.00,8.33 21.60,4.76 21.60,11.76 15.00,15.32" fill="#fff" stroke="#4a8fee" stroke-width="1.7" stroke-linejoin="round"/><polygon points="1.40,17.36 8.00,20.93 8.00,27.92 1.40,24.36" fill="#4a8fee" stroke="#4a8fee" stroke-width="1.7" stroke-linejoin="round"/><polygon points="8.00,13.80 14.60,17.36 8.00,20.93 1.40,17.36" fill="#fff" stroke="#4a8fee" stroke-width="1.7" stroke-linejoin="round"/><polygon points="8.00,20.93 14.60,17.36 14.60,24.36 8.00,27.92" fill="#fff" stroke="#4a8fee" stroke-width="1.7" stroke-linejoin="round"/><polygon points="15.00,17.36 21.60,20.93 21.60,27.92 15.00,24.36" fill="#4a8fee" stroke="#4a8fee" stroke-width="1.7" stroke-linejoin="round"/><polygon points="21.60,13.80 28.20,17.36 21.60,20.93 15.00,17.36" fill="#fff" stroke="#4a8fee" stroke-width="1.7" stroke-linejoin="round"/><polygon points="21.60,20.93 28.20,17.36 28.20,24.36 21.60,27.92" fill="#fff" stroke="#4a8fee" stroke-width="1.7" stroke-linejoin="round"/></svg><div class="lab" style="left:107px">企业客户标签体系</div><svg class="more" viewBox="0 0 6 20"><circle cx="3" cy="3" r="3" fill="#5a5a5a"/><circle cx="3" cy="10" r="3" fill="#5a5a5a"/><circle cx="3" cy="17" r="3" fill="#5a5a5a"/></svg></div>
<div class="tn" style="top:1159px;"><svg class="abs" style="left:68px;top:14px" width="30" height="31" viewBox="0 0 30 31"><polygon points="8.40,4.76 15.00,8.33 15.00,15.32 8.40,11.76" fill="#4a8fee" stroke="#4a8fee" stroke-width="1.7" stroke-linejoin="round"/><polygon points="15.00,1.20 21.60,4.76 15.00,8.33 8.40,4.76" fill="#fff" stroke="#4a8fee" stroke-width="1.7" stroke-linejoin="round"/><polygon points="15.00,8.33 21.60,4.76 21.60,11.76 15.00,15.32" fill="#fff" stroke="#4a8fee" stroke-width="1.7" stroke-linejoin="round"/><polygon points="1.40,17.36 8.00,20.93 8.00,27.92 1.40,24.36" fill="#4a8fee" stroke="#4a8fee" stroke-width="1.7" stroke-linejoin="round"/><polygon points="8.00,13.80 14.60,17.36 8.00,20.93 1.40,17.36" fill="#fff" stroke="#4a8fee" stroke-width="1.7" stroke-linejoin="round"/><polygon points="8.00,20.93 14.60,17.36 14.60,24.36 8.00,27.92" fill="#fff" stroke="#4a8fee" stroke-width="1.7" stroke-linejoin="round"/><polygon points="15.00,17.36 21.60,20.93 21.60,27.92 15.00,24.36" fill="#4a8fee" stroke="#4a8fee" stroke-width="1.7" stroke-linejoin="round"/><polygon points="21.60,13.80 28.20,17.36 21.60,20.93 15.00,17.36" fill="#fff" stroke="#4a8fee" stroke-width="1.7" stroke-linejoin="round"/><polygon points="21.60,20.93 28.20,17.36 28.20,24.36 21.60,27.92" fill="#fff" stroke="#4a8fee" stroke-width="1.7" stroke-linejoin="round"/></svg><div class="lab" style="left:107px">测试标签实体</div><svg class="more" viewBox="0 0 6 20"><circle cx="3" cy="3" r="3" fill="#5a5a5a"/><circle cx="3" cy="10" r="3" fill="#5a5a5a"/><circle cx="3" cy="17" r="3" fill="#5a5a5a"/></svg></div>
<div class="tn" style="top:1215px;"><svg class="abs" style="left:68px;top:14px" width="30" height="31" viewBox="0 0 30 31"><polygon points="8.40,4.76 15.00,8.33 15.00,15.32 8.40,11.76" fill="#4a8fee" stroke="#4a8fee" stroke-width="1.7" stroke-linejoin="round"/><polygon points="15.00,1.20 21.60,4.76 15.00,8.33 8.40,4.76" fill="#fff" stroke="#4a8fee" stroke-width="1.7" stroke-linejoin="round"/><polygon points="15.00,8.33 21.60,4.76 21.60,11.76 15.00,15.32" fill="#fff" stroke="#4a8fee" stroke-width="1.7" stroke-linejoin="round"/><polygon points="1.40,17.36 8.00,20.93 8.00,27.92 1.40,24.36" fill="#4a8fee" stroke="#4a8fee" stroke-width="1.7" stroke-linejoin="round"/><polygon points="8.00,13.80 14.60,17.36 8.00,20.93 1.40,17.36" fill="#fff" stroke="#4a8fee" stroke-width="1.7" stroke-linejoin="round"/><polygon points="8.00,20.93 14.60,17.36 14.60,24.36 8.00,27.92" fill="#fff" stroke="#4a8fee" stroke-width="1.7" stroke-linejoin="round"/><polygon points="15.00,17.36 21.60,20.93 21.60,27.92 15.00,24.36" fill="#4a8fee" stroke="#4a8fee" stroke-width="1.7" stroke-linejoin="round"/><polygon points="21.60,13.80 28.20,17.36 21.60,20.93 15.00,17.36" fill="#fff" stroke="#4a8fee" stroke-width="1.7" stroke-linejoin="round"/><polygon points="21.60,20.93 28.20,17.36 28.20,24.36 21.60,27.92" fill="#fff" stroke="#4a8fee" stroke-width="1.7" stroke-linejoin="round"/></svg><div class="lab" style="left:107px">LSD优秀销售员工</div><svg class="more" viewBox="0 0 6 20"><circle cx="3" cy="3" r="3" fill="#5a5a5a"/><circle cx="3" cy="10" r="3" fill="#5a5a5a"/><circle cx="3" cy="17" r="3" fill="#5a5a5a"/></svg></div>
</div>
<div id="main">
<div class="t" style="left:30px;top:30px;line-height:64px;font-size:28px;color:#303133">标签名称:</div>
<div class="abs" style="left:170px;top:30px;width:560px;height:64px;border:2px solid #409eff;border-radius:8px;background:#fff"><div class="abs" style="left:32px;top:17px;width:2px;height:30px;background:#303133"></div><div class="t" style="left:35px;top:0;line-height:60px;font-size:28px;color:#c0c4cc">请输入标签名称或关键词:</div></div>
<div class="t" style="left:761px;top:30px;line-height:64px;font-size:28px;color:#303133">状态:</div>
<div class="abs" style="left:844px;top:30px;width:240px;height:64px;border:2px solid #dcdfe6;border-radius:8px;background:#fff"><div class="t" style="left:31px;top:0;line-height:60px;font-size:28px;color:#606266">全部</div><svg class="abs" style="left:192px;top:24px" width="22" height="12" viewBox="0 0 22 12"><path d="M1 1 L11 11 L21 1" fill="none" stroke="#c0c4cc" stroke-width="2"/></svg></div>
<div class="btn" style="left:1188px;width:112px">查询</div>
<div class="btn" style="left:1330px;width:160px">批量发布</div>
<div class="btn" style="left:1520px;width:160px">批量下架</div>
<div class="btn" style="left:1710px;width:160px">新增标签</div>
<div class="abs" style="left:30px;top:124px;width:1839px;height:1225px;border:2px solid #ebeef5;border-bottom:none">
<div class="abs" style="left:0;top:0;width:1835px;height:96px;background:#f3f6f9;border-bottom:2px solid #ebeef5">
<div class="cb" style="left:34px;top:33px"></div>
<div class="th" style="left:129px">#</div>
<div class="th" style="left:198px">标签名称</div>
<div class="th" style="left:437px">标签分类</div>
<div class="th" style="left:677px">生效版本</div>
<div class="th" style="left:839px">当前版本</div>
<div class="th" style="left:997px">状态</div>
<div class="th" style="left:1188px">修改人</div>
<div class="th" style="left:1378px">修改时间</div>
<div class="th" style="left:1598px">操作</div>
</div>
<div class="row" style="top:96px;background:#f4f7fa;">
<div class="cb" style="left:34px;top:79px"></div>
<div class="cell" style="left:122px;top:70px;width:30px;text-align:center">1</div>
<div class="cell" style="left:198px;top:70px;">规模发展</div>
<div class="cell" style="left:437px;top:24px;">一企一档标签体<br>系<span style="margin:0 2.5px">/</span>认定评价类<br>标签<span style="margin:0 2.5px">/</span>规模发展</div>
<div class="cell" style="left:837px;top:70px;"><span style="letter-spacing:-1.6px">V1.0</span></div>
<div class="cell" style="left:997px;top:70px;">待发布</div>
<div class="op" style="left:1600px;top:47px">查看</div><div class="op" style="left:1682px;top:47px">编辑</div><div class="op" style="left:1764px;top:47px;color:#3c92ea">删除</div>
<div class="op" style="left:1600px;top:111px">申请发布</div>
</div>
<div class="row" style="top:284px;">
<div class="cb" style="left:34px;top:79px"></div>
<div class="cell" style="left:122px;top:70px;width:30px;text-align:center">2</div>
<div class="cell" style="left:198px;top:70px;">上市</div>
<div class="cell" style="left:437px;top:24px;">一企一档标签体<br>系<span style="margin:0 2.5px">/</span>认定评价类<br>标签<span style="margin:0 2.5px">/</span>规模发展</div>
<div class="cell" style="left:837px;top:70px;"><span style="letter-spacing:-1.6px">V1.0</span></div>
<div class="cell" style="left:997px;top:70px;">待发布</div>
<div class="op" style="left:1600px;top:47px">查看</div><div class="op" style="left:1682px;top:47px">编辑</div><div class="op" style="left:1764px;top:47px;color:#3c92ea">删除</div>
<div class="op" style="left:1600px;top:111px">申请发布</div>
</div>
<div class="row" style="top:472px;">
<div class="cb" style="left:34px;top:79px"></div>
<div class="cell" style="left:122px;top:70px;width:30px;text-align:center">3</div>
<div class="cell" style="left:198px;top:47px;">跨国公司地区总<br>部和功能性机构</div>
<div class="cell" style="left:437px;top:24px;">一企一档标签体<br>系<span style="margin:0 2.5px">/</span>认定评价类<br>标签<span style="margin:0 2.5px">/</span>规模发展</div>
<div class="cell" style="left:677px;top:70px;"><span style="color:#409eff;border-bottom:2px solid #409eff;padding-bottom:6px;letter-spacing:-1.6px">V1.0</span></div>
<div class="cell" style="left:837px;top:70px;"><span style="letter-spacing:-1.6px">V1.0</span></div>
<div class="cell" style="left:997px;top:70px;">已发布</div>
<div class="cell" style="left:1188px;top:47px;">龙石数据–<br>徐新洁</div>
<div class="cell" style="left:1378px;top:47px;letter-spacing:-0.4px">2024–12–17<br>14:13:56</div>
<div class="op" style="left:1600px;top:47px">查看</div><div class="op" style="left:1682px;top:47px">编辑</div><div class="op" style="left:1764px;top:47px;color:#c0c4cc">删除</div>
<div class="op" style="left:1600px;top:111px">申请下架</div>
</div>
<div class="row" style="top:660px;">
<div class="cb" style="left:34px;top:79px"></div>
<div class="cell" style="left:122px;top:70px;width:30px;text-align:center">4</div>
<div class="cell" style="left:198px;top:70px;">总部企业</div>
<div class="cell" style="left:437px;top:24px;">一企一档标签体<br>系<span style="margin:0 2.5px">/</span>认定评价类<br>标签<span style="margin:0 2.5px">/</span>规模发展</div>
<div class="cell" style="left:677px;top:70px;"><span style="color:#409eff;border-bottom:2px solid #409eff;padding-bottom:6px;letter-spacing:-1.6px">V1.0</span></div>
<div class="cell" style="left:837px;top:70px;"><span style="letter-spacing:-1.6px">V1.0</span></div>
<div class="cell" style="left:997px;top:70px;">已发布</div>
<div class="cell" style="left:1188px;top:47px;">龙石数据–<br>徐新洁</div>
<div class="cell" style="left:1378px;top:47px;letter-spacing:-0.4px">2024–12–17<br>14:14:02</div>
<div class="op" style="left:1600px;top:47px">查看</div><div class="op" style="left:1682px;top:47px">编辑</div><div class="op" style="left:1764px;top:47px;color:#c0c4cc">删除</div>
<div class="op" style="left:1600px;top:111px">申请下架</div>
</div>
<div class="row" style="top:848px;">
<div class="cb" style="left:34px;top:79px"></div>
<div class="cell" style="left:122px;top:70px;width:30px;text-align:center">5</div>
<div class="cell" style="left:198px;top:47px;">分类申请认定总<br>部</div>
<div class="cell" style="left:437px;top:24px;">一企一档标签体<br>系<span style="margin:0 2.5px">/</span>认定评价类<br>标签<span style="margin:0 2.5px">/</span>规模发展</div>
<div class="cell" style="left:837px;top:70px;"><span style="letter-spacing:-1.6px">V1.0</span></div>
<div class="cell" style="left:997px;top:70px;">待发布</div>
<div class="op" style="left:1600px;top:47px">查看</div><div class="op" style="left:1682px;top:47px">编辑</div><div class="op" style="left:1764px;top:47px;color:#3c92ea">删除</div>
<div class="op" style="left:1600px;top:111px">申请发布</div>
</div>
<div class="row" style="top:1036px;">
<div class="cb" style="left:34px;top:79px"></div>
<div class="cell" style="left:122px;top:70px;width:30px;text-align:center">6</div>
<div class="cell" style="left:198px;top:70px;">总部经济企业</div>
<div class="cell" style="left:437px;top:24px;">一企一档标签体<br>系<span style="margin:0 2.5px">/</span>认定评价类<br>标签<span style="margin:0 2.5px">/</span>规模发展</div>
<div class="cell" style="left:837px;top:70px;"><span style="letter-spacing:-1.6px">V1.0</span></div>
<div class="cell" style="left:997px;top:70px;">待发布</div>
<div class="cell" style="left:1188px;top:47px;">龙石数据–<br>徐新洁</div>
<div class="cell" style="left:1378px;top:47px;letter-spacing:-0.4px">2024–12–17<br>14:17:45</div>
<div class="op" style="left:1600px;top:47px">查看</div><div class="op" style="left:1682px;top:47px">编辑</div><div class="op" style="left:1764px;top:47px;color:#3c92ea">删除</div>
<div class="op" style="left:1600px;top:111px">申请发布</div>
</div>
</div>
<div class="t" style="left:1052px;top:1380px;line-height:56px;font-size:26px;color:#606266">共 6 条</div>
<div class="abs" style="left:1166px;top:1381px;width:200px;height:56px;border:2px solid #dcdfe6;border-radius:6px"><div class="t" style="left:38px;top:0;line-height:52px;font-size:26px;color:#606266">10条/页</div><svg class="abs" style="left:166px;top:21px" width="18" height="10" viewBox="0 0 18 10"><path d="M1 1 L9 9 L17 1" fill="none" stroke="#c0c4cc" stroke-width="2"/></svg></div>
<div class="abs" style="left:1406px;top:1380px;width:60px;height:56px;background:#f4f4f5;border-radius:4px"></div>
<svg class="abs" style="left:1428px;top:1398px" width="12" height="20" viewBox="0 0 12 20"><path d="M10 1 L2 10 L10 19" fill="none" stroke="#c0c4cc" stroke-width="2.2"/></svg>
<div class="abs" style="left:1486px;top:1380px;width:60px;height:56px;background:#409eff;border-radius:4px;color:#fff;font-size:26px;font-weight:400;-webkit-text-stroke-width:0.5px;text-align:center;line-height:56px">1</div>
<div class="abs" style="left:1566px;top:1380px;width:60px;height:56px;background:#f4f4f5;border-radius:4px"></div>
<svg class="abs" style="left:1590px;top:1398px" width="12" height="20" viewBox="0 0 12 20"><path d="M2 1 L10 10 L2 19" fill="none" stroke="#c0c4cc" stroke-width="2.2"/></svg>
<div class="t" style="left:1685px;top:1380px;line-height:56px;font-size:26px;color:#606266">前往</div>
<div class="abs" style="left:1745px;top:1381px;width:90px;height:56px;border:2px solid #dcdfe6;border-radius:6px;text-align:center;line-height:52px;font-size:26px;color:#606266">1</div>
<div class="t" style="left:1845px;top:1380px;line-height:56px;font-size:26px;color:#606266">页</div>
</div>
</body></html>
